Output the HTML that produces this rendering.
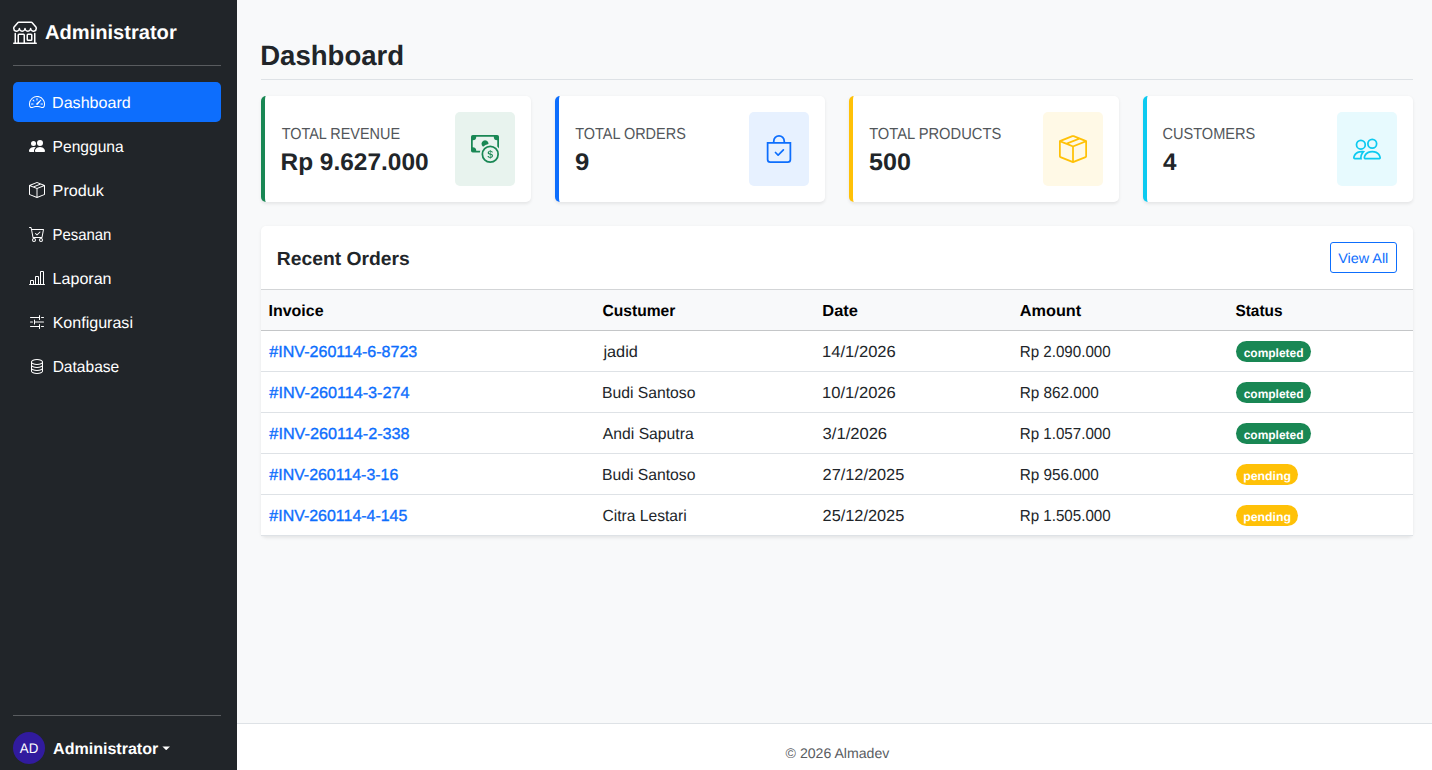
<!DOCTYPE html>
<html lang="en">
<head>
<meta charset="utf-8">
<title>Dashboard</title>
<style>
*{box-sizing:border-box;margin:0;padding:0}
html,body{width:1432px;height:770px;overflow:hidden}
body{text-rendering:geometricPrecision;font-family:"Liberation Sans",sans-serif;font-size:16px;line-height:24px;color:#212529;background:#f8f9fa;position:relative}
svg{display:block;fill:currentColor}
.t{display:inline-block;white-space:nowrap}

/* ---------- sidebar ---------- */
#sidebar{position:absolute;left:0;top:0;width:237px;height:770px;background:#212529;color:#fff}
#brand{position:absolute;left:13px;top:20px;height:24px;display:flex;align-items:center}
#brand svg{width:24px;height:24px;margin-right:8px}
#brand .t{font-weight:700;font-size:20px;line-height:24px;position:relative;top:1px}
.hr{position:absolute;left:13px;width:208px;height:1px;background:#595c5f}
#hr1{top:65px}
#hr2{top:715px}
#nav{position:absolute;left:13px;top:82px;width:208px;list-style:none}
#nav li{height:40px;margin-bottom:4px;border-radius:5px;display:flex;align-items:center;padding-left:16px}
#nav li.active{background:#0d6efd}
#nav svg{width:16px;height:16px;margin-right:8px;flex:none}
#nav .t{font-size:16px;position:relative;top:2px}
#user{position:absolute;left:13px;top:732px;height:32px;display:flex;align-items:center}
#avatar{margin-right:8px;width:32px;height:32px;border-radius:50%;background:#311b9e;font-size:14px;line-height:32px;text-align:center}
#user .name{font-weight:700;font-size:16px;position:relative;top:2px}
#caret{position:absolute;left:149.4px;top:14.4px;width:7.6px;height:3.8px;background:#fff;clip-path:polygon(0 0,100% 0,50% 100%)}

/* ---------- main ---------- */
#title{position:absolute;left:261px;top:39px;font-size:28px;line-height:34px;font-weight:700}
#titleline{position:absolute;left:261px;top:79px;width:1152px;height:1px;background:#dee2e6}
.card{position:absolute;top:96px;width:270px;height:106px;background:#fff;border-radius:5px;border-left:4px solid;box-shadow:0 1.6px 3.2px rgba(0,0,0,.08)}
.card .lbl{position:absolute;left:16px;top:27px;font-size:16px;line-height:24px;color:#52565a}
.card .val{position:absolute;left:16px;top:52px;font-size:24px;line-height:29px;font-weight:700;color:#212529}
.card .ico{position:absolute;left:190px;top:16px;width:60px;height:74px;border-radius:5px;display:flex;align-items:center;justify-content:center}
.card .ico svg{width:28px;height:28px}
#c1{left:261px;border-color:#198754}#c1 .ico{background:#e8f3ee;color:#198754}
#c2{left:555px;border-color:#0d6efd}#c2 .ico{background:#e7f1ff;color:#0d6efd}
#c3{left:849px;border-color:#ffc107}#c3 .ico{background:#fff9e6;color:#ffc107}
#c4{left:1143px;border-color:#0dcaf0}#c4 .ico{background:#e7fafe;color:#0dcaf0}

/* ---------- orders ---------- */
#orders{position:absolute;left:261px;top:226px;width:1152px;height:310px;background:#fff;border-radius:5px;box-shadow:0 1.6px 3.2px rgba(0,0,0,.08)}
#ohead{height:64px;border-bottom:1px solid #d3d5d7;position:relative}
#ohead h5{position:absolute;left:16px;top:22px;font-size:19px;line-height:24px;font-weight:700}
#viewall{position:absolute;left:1069px;top:16px;width:67px;height:31px;border:1px solid #0d6efd;border-radius:3px;color:#0d6efd;font-size:14px;line-height:31px;text-align:center}
table{border-collapse:separate;border-spacing:0;table-layout:fixed;width:1152px}
th,td{height:41px;padding:10px 8px 0;text-align:left;vertical-align:top;border-bottom:1px solid #dee2e6;white-space:nowrap;font-size:16px;line-height:24px}
th{background:#f8f9fa;font-weight:700;color:#000;border-bottom-color:#c4c6c8}
td{background:#fff}
td a{color:#0d6efd;text-decoration:none;-webkit-text-stroke:.35px #0d6efd}
.badge{display:block;margin-top:0;height:21px;border-radius:11px;padding:0 8px;color:#fff;font-size:12px;line-height:21px;font-weight:700}
.bg-s{width:75px}.bg-w{width:62px}
.badge .t{position:relative;top:2px}
.bg-s{background:#198754}
.bg-w{background:#ffc107}

/* ---------- footer ---------- */
#footer{position:absolute;left:237px;top:723px;width:1195px;height:47px;background:#fff;border-top:1px solid #dee2e6}
#ftext{position:absolute;left:786px;top:743px;font-size:14px;line-height:21px;color:#595c5f}
/*AUTO*/
.t{transform-origin:0 50%}
#brandt{transform:translateX(-0.00px) scaleX(1.0045)}
#n1{transform:translateX(-0.93px) scaleX(1.0045)}
#n2{transform:translateX(-0.42px) scaleX(0.9740)}
#n3{transform:translateX(-0.39px) scaleX(1.0110)}
#n4{transform:translateX(-0.50px) scaleX(0.9328)}
#n5{transform:translateX(-0.39px) scaleX(1.0031)}
#n6{transform:translateX(-0.37px) scaleX(1.0035)}
#n7{transform:translateX(-0.37px) scaleX(0.9726)}
#usert{transform:translateX(0.05px) scaleX(1.0030)}
#adt{transform:translateX(0.84px) scaleX(0.9496)}
#titlet{transform:translateX(-0.86px) scaleX(0.9847)}
#l1{transform:translateX(0.67px) scaleX(0.9016)}
#v1{transform:translateX(-0.50px) scaleX(1.0181)}
#l2{transform:translateX(0.16px) scaleX(0.9038)}
#v2{transform:translateX(0.01px) scaleX(1.0701)}
#l3{transform:translateX(0.15px) scaleX(0.9187)}
#v3{transform:translateX(0.05px) scaleX(1.0450)}
#l4{transform:translateX(-0.56px) scaleX(0.9106)}
#v4{transform:translateX(0.05px) scaleX(1.0085)}
#oh{transform:translateX(-0.21px) scaleX(1.0152)}
#va{transform:translateX(-0.77px) scaleX(1.0269)}
#h1{transform:translateX(-0.44px) scaleX(0.9977)}
#h2{transform:translateX(-0.50px) scaleX(0.9753)}
#h3{transform:translateX(-0.70px) scaleX(1.0254)}
#h4{transform:translateX(-0.26px) scaleX(1.0165)}
#h5{transform:translateX(-0.56px) scaleX(0.9622)}
#i1{transform:translateX(0.37px) scaleX(1.0034)}
#i2{transform:translateX(0.37px) scaleX(1.0123)}
#i3{transform:translateX(0.37px) scaleX(1.0129)}
#i4{transform:translateX(0.37px) scaleX(0.9946)}
#i5{transform:translateX(0.37px) scaleX(0.9964)}
#u1{transform:translateX(0.39px) scaleX(1.0185)}
#u2{transform:translateX(-1.07px) scaleX(0.9821)}
#u3{transform:translateX(-0.17px) scaleX(0.9817)}
#u4{transform:translateX(-1.07px) scaleX(0.9821)}
#u5{transform:translateX(-0.56px) scaleX(0.9764)}
#d1{transform:translateX(-0.90px) scaleX(1.0348)}
#d2{transform:translateX(-0.90px) scaleX(1.0348)}
#d3{transform:translateX(-0.40px) scaleX(1.0354)}
#d4{transform:translateX(-0.43px) scaleX(1.0202)}
#d5{transform:translateX(-0.43px) scaleX(1.0202)}
#a1{transform:translateX(-0.28px) scaleX(0.9464)}
#a2{transform:translateX(-0.30px) scaleX(0.9559)}
#a3{transform:translateX(-0.28px) scaleX(0.9464)}
#a4{transform:translateX(-0.30px) scaleX(0.9559)}
#a5{transform:translateX(-0.28px) scaleX(0.9464)}
#ft{transform:translateX(-0.43px) scaleX(1.0084)}
.bc{transform:translateX(-0.33px) scaleX(0.9977)}
.bp{transform:translateX(-0.86px) scaleX(1.0285)}
/*END*/
</style>
</head>
<body>
<div id="sidebar">
  <div id="brand">
    <svg viewBox="0 0 16 16"><path d="M2.97 1.35A1 1 0 0 1 3.73 1h8.54a1 1 0 0 1 .76.35l2.609 3.044A1.5 1.5 0 0 1 16 5.37v.255a2.375 2.375 0 0 1-4.25 1.458A2.37 2.37 0 0 1 9.875 8 2.37 2.37 0 0 1 8 7.083 2.37 2.37 0 0 1 6.125 8a2.37 2.37 0 0 1-1.875-.917A2.375 2.375 0 0 1 0 5.625V5.37a1.5 1.5 0 0 1 .361-.976zm1.78 4.275a1.375 1.375 0 0 0 2.75 0 .5.5 0 0 1 1 0 1.375 1.375 0 0 0 2.75 0 .5.5 0 0 1 1 0 1.375 1.375 0 1 0 2.75 0V5.37a.5.5 0 0 0-.12-.325L12.27 2H3.73L1.12 5.045A.5.5 0 0 0 1 5.37v.255a1.375 1.375 0 0 0 2.75 0 .5.5 0 0 1 1 0M1.5 8.5A.5.5 0 0 1 2 9v6h1v-5a1 1 0 0 1 1-1h3a1 1 0 0 1 1 1v5h6V9a.5.5 0 0 1 1 0v6h.5a.5.5 0 0 1 0 1H.5a.5.5 0 0 1 0-1H1V9a.5.5 0 0 1 .5-.5M4 15h3v-5H4zm5-5a1 1 0 0 1 1-1h2a1 1 0 0 1 1 1v3a1 1 0 0 1-1 1h-2a1 1 0 0 1-1-1zm3 0h-2v3h2z"/></svg>
    <span class="t" id="brandt">Administrator</span>
  </div>
  <div class="hr" id="hr1"></div>
  <ul id="nav">
    <li class="active"><svg viewBox="0 0 16 16"><path d="M8 4a.5.5 0 0 1 .5.5V6a.5.5 0 0 1-1 0V4.500A.5.5 0 0 1 8 4M3.732 5.732a.5.5 0 0 1 .707 0l.915.914a.5.5 0 1 1-.708.708l-.914-.915a.5.5 0 0 1 0-.707M2 10a.5.5 0 0 1 .5-.5h1.586a.5.5 0 0 1 0 1H2.500A.5.5 0 0 1 2 10m9.500 0a.5.5 0 0 1 .5-.5h1.500a.5.5 0 0 1 0 1H12a.5.5 0 0 1-.5-.5m.754-4.246a.39.39 0 0 0-.527-.02L7.547 9.310a.91.91 0 1 0 1.302 1.258l3.434-4.297a.39.39 0 0 0-.029-.518z"/><path fill-rule="evenodd" d="M0 10a8 8 0 1 1 15.547 2.661c-.442 1.253-1.845 1.602-2.932 1.250C11.309 13.488 9.475 13 8 13c-1.474 0-3.310.488-4.615.911-1.087.352-2.490.003-2.932-1.250A8 8 0 0 1 0 10m8-7a7 7 0 0 0-6.603 9.329c.203.575.923.876 1.680.630C4.397 12.533 6.358 12 8 12s3.604.532 4.923.960c.757.245 1.477-.056 1.680-.631A7 7 0 0 0 8 3"/></svg><span class="t" id="n1">Dashboard</span></li>
    <li><svg viewBox="0 0 16 16"><path d="M7 14s-1 0-1-1 1-4 5-4 5 3 5 4-1 1-1 1zm4-6a3 3 0 1 0 0-6 3 3 0 0 0 0 6m-5.784 6A2.240 2.240 0 0 1 5 13c0-1.355.680-2.750 1.936-3.720A6.300 6.300 0 0 0 5 9c-4 0-5 3-5 4s1 1 1 1zM4.500 8a2.500 2.500 0 1 0 0-5 2.500 2.500 0 0 0 0 5"/></svg><span class="t" id="n2">Pengguna</span></li>
    <li><svg viewBox="0 0 16 16"><path d="M8.186 1.113a.5.5 0 0 0-.372 0L1.846 3.500l2.404.961L10.404 2zm3.564 1.426L5.596 5 8 5.961 14.154 3.500zm3.250 1.700-6.500 2.600v7.922l6.500-2.600V4.240zM7.500 14.762V6.838L1 4.239v7.923zM7.443.184a1.500 1.500 0 0 1 1.114 0l7.129 2.852A.5.5 0 0 1 16 3.500v8.662a1 1 0 0 1-.629.928l-7.185 2.874a.5.5 0 0 1-.372 0L.630 13.090a1 1 0 0 1-.630-.928V3.500a.5.5 0 0 1 .314-.464z"/></svg><span class="t" id="n3">Produk</span></li>
    <li><svg viewBox="0 0 16 16"><path d="M11.354 6.354a.5.5 0 0 0-.708-.708L8 8.293 6.854 7.146a.5.5 0 1 0-.708.708l1.500 1.500a.5.5 0 0 0 .708 0z"/><path d="M.5 1a.5.5 0 0 0 0 1h1.110l.401 1.607 1.498 7.985A.5.5 0 0 0 4 12h1a2 2 0 1 0 0 4 2 2 0 0 0 0-4h7a2 2 0 1 0 0 4 2 2 0 0 0 0-4h1a.5.5 0 0 0 .491-.408l1.500-8A.5.5 0 0 0 14.500 3H2.890l-.405-1.621A.5.5 0 0 0 2 1zm3.915 10L3.102 4h10.796l-1.313 7zM6 14a1 1 0 1 1-2 0 1 1 0 0 1 2 0m7 0a1 1 0 1 1-2 0 1 1 0 0 1 2 0"/></svg><span class="t" id="n4">Pesanan</span></li>
    <li><svg viewBox="0 0 16 16"><path d="M11 2a1 1 0 0 1 1-1h2a1 1 0 0 1 1 1v12h.5a.5.5 0 0 1 0 1H.5a.5.5 0 0 1 0-1H1v-3a1 1 0 0 1 1-1h2a1 1 0 0 1 1 1v3h1V7a1 1 0 0 1 1-1h2a1 1 0 0 1 1 1v7h1zm1 12h2V2h-2zm-3 0V7H7v7zm-5 0v-3H2v3z"/></svg><span class="t" id="n5">Laporan</span></li>
    <li><svg viewBox="0 0 16 16"><path fill-rule="evenodd" d="M10.500 1a.5.5 0 0 1 .5.5v4a.5.5 0 0 1-1 0V4H1.500a.5.5 0 0 1 0-1H10V1.500a.5.5 0 0 1 .5-.5M12 3.500a.5.5 0 0 1 .5-.5h2a.5.5 0 0 1 0 1h-2a.5.5 0 0 1-.5-.5m-6.500 2A.5.5 0 0 1 6 6v1.500h8.500a.5.5 0 0 1 0 1H6V10a.5.5 0 0 1-1 0V6a.5.5 0 0 1 .5-.5M1 8a.5.5 0 0 1 .5-.5h2a.5.5 0 0 1 0 1h-2A.5.5 0 0 1 1 8m9.500 2a.5.5 0 0 1 .5.5v4a.5.5 0 0 1-1 0V13H1.500a.5.5 0 0 1 0-1H10v-1.500a.5.5 0 0 1 .5-.5m1.500 2.500a.5.5 0 0 1 .5-.5h2a.5.5 0 0 1 0 1h-2a.5.5 0 0 1-.5-.5"/></svg><span class="t" id="n6">Konfigurasi</span></li>
    <li><svg viewBox="0 0 16 16"><path d="M4.318 2.687C5.234 2.271 6.536 2 8 2s2.766.270 3.682.687C12.644 3.125 13 3.627 13 4c0 .374-.356.875-1.318 1.313C10.766 5.729 9.464 6 8 6s-2.766-.270-3.682-.687C3.356 4.875 3 4.373 3 4c0-.374.356-.875 1.318-1.313M13 5.698V7c0 .374-.356.875-1.318 1.313C10.766 8.729 9.464 9 8 9s-2.766-.270-3.682-.687C3.356 7.875 3 7.373 3 7V5.698c.271.202.580.378.904.525C4.978 6.711 6.427 7 8 7s3.022-.289 4.096-.777A5 5 0 0 0 13 5.698M14 4c0-1.007-.875-1.755-1.904-2.223C11.022 1.289 9.573 1 8 1s-3.022.289-4.096.777C2.875 2.245 2 2.993 2 4v9c0 1.007.875 1.755 1.904 2.223C4.978 15.710 6.427 16 8 16s3.022-.289 4.096-.777C13.125 14.755 14 14.007 14 13zm-1 4.698V10c0 .374-.356.875-1.318 1.313C10.766 11.729 9.464 12 8 12s-2.766-.270-3.682-.687C3.356 10.875 3 10.373 3 10V8.698c.271.202.580.378.904.525C4.978 9.710 6.427 10 8 10s3.022-.289 4.096-.777A5 5 0 0 0 13 8.698m0 3V13c0 .374-.356.875-1.318 1.313C10.766 14.729 9.464 15 8 15s-2.766-.270-3.682-.687C3.356 13.875 3 13.373 3 13v-1.302c.271.202.580.378.904.525C4.978 12.710 6.427 13 8 13s3.022-.289 4.096-.777c.324-.147.633-.323.904-.525"/></svg><span class="t" id="n7">Database</span></li>
  </ul>
  <div class="hr" id="hr2"></div>
  <div id="user"><div id="avatar"><span class="t" id="adt">AD</span></div><span class="t name" id="usert">Administrator</span><span id="caret"></span></div>
</div>

<div id="title"><span class="t" id="titlet">Dashboard</span></div>
<div id="titleline"></div>

<div class="card" id="c1"><div class="lbl"><span class="t" id="l1">TOTAL REVENUE</span></div><div class="val"><span class="t" id="v1">Rp 9.627.000</span></div><div class="ico"><svg viewBox="0 0 16 16"><path fill-rule="evenodd" d="M11 15a4 4 0 1 0 0-8 4 4 0 0 0 0 8m5-4a5 5 0 1 1-10 0 5 5 0 0 1 10 0"/><path d="M9.438 11.944c.047.596.518 1.060 1.363 1.116v.440h.375v-.443c.875-.061 1.386-.529 1.386-1.207 0-.618-.390-.936-1.090-1.100l-.296-.070v-1.200c.376.043.614.248.671.532h.658c-.047-.575-.540-1.024-1.329-1.073V8.500h-.375v.450c-.747.073-1.255.522-1.255 1.160 0 .564.380.923 1.010 1.070l.245.060v1.273c-.385-.058-.639-.270-.696-.569zm1.360-1.354c-.369-.085-.569-.260-.569-.522 0-.294.216-.514.572-.578v1.100zm.432.746c.449.104.655.272.655.569 0 .339-.257.571-.709.614v-1.195z"/><path d="M1 0a1 1 0 0 0-1 1v8a1 1 0 0 0 1 1h4.083q.088-.517.258-1H3a2 2 0 0 0-2-2V3a2 2 0 0 0 2-2h10a2 2 0 0 0 2 2v3.528c.380.340.717.728 1 1.154V1a1 1 0 0 0-1-1z"/><path d="M9.998 5.083 10 5a2 2 0 1 0-3.132 1.650 6 6 0 0 1 3.130-1.567"/></svg></div></div>
<div class="card" id="c2"><div class="lbl"><span class="t" id="l2">TOTAL ORDERS</span></div><div class="val"><span class="t" id="v2">9</span></div><div class="ico"><svg viewBox="0 0 16 16"><path fill-rule="evenodd" d="M10.854 8.146a.5.5 0 0 1 0 .708l-3 3a.5.5 0 0 1-.708 0l-1.500-1.500a.5.5 0 0 1 .708-.708L7.500 10.793l2.646-2.647a.5.5 0 0 1 .708 0"/><path d="M8 1a2.500 2.500 0 0 1 2.500 2.500V4h-5v-.5A2.500 2.500 0 0 1 8 1m3.500 3v-.5a3.500 3.500 0 1 0-7 0V4H1v10a2 2 0 0 0 2 2h10a2 2 0 0 0 2-2V4zM2 5h12v9a1 1 0 0 1-1 1H3a1 1 0 0 1-1-1z"/></svg></div></div>
<div class="card" id="c3"><div class="lbl"><span class="t" id="l3">TOTAL PRODUCTS</span></div><div class="val"><span class="t" id="v3">500</span></div><div class="ico"><svg viewBox="0 0 16 16"><path d="M8.186 1.113a.5.5 0 0 0-.372 0L1.846 3.500l2.404.961L10.404 2zm3.564 1.426L5.596 5 8 5.961 14.154 3.500zm3.250 1.700-6.500 2.600v7.922l6.500-2.600V4.240zM7.500 14.762V6.838L1 4.239v7.923zM7.443.184a1.500 1.500 0 0 1 1.114 0l7.129 2.852A.5.5 0 0 1 16 3.500v8.662a1 1 0 0 1-.629.928l-7.185 2.874a.5.5 0 0 1-.372 0L.630 13.090a1 1 0 0 1-.630-.928V3.500a.5.5 0 0 1 .314-.464z"/></svg></div></div>
<div class="card" id="c4"><div class="lbl"><span class="t" id="l4">CUSTOMERS</span></div><div class="val"><span class="t" id="v4">4</span></div><div class="ico"><svg viewBox="0 0 16 16"><path d="M15 14s1 0 1-1-1-4-5-4-5 3-5 4 1 1 1 1zm-7.978-1L7 12.996c.001-.264.167-1.030.760-1.720C8.312 10.629 9.282 10 11 10c1.717 0 2.687.630 3.240 1.276.593.690.758 1.457.760 1.720l-.008.002-.014.002zM11 7a2 2 0 1 0 0-4 2 2 0 0 0 0 4m3-2a3 3 0 1 1-6 0 3 3 0 0 1 6 0M6.936 9.280a6 6 0 0 0-1.230-.247A7 7 0 0 0 5 9c-4 0-5 3-5 4q0 1 1 1h4.216A2.240 2.240 0 0 1 5 13c0-1.010.377-2.042 1.090-2.904.243-.294.526-.569.846-.816M4.920 10A5.500 5.500 0 0 0 4 13H1c0-.260.164-1.030.760-1.724.545-.636 1.492-1.256 3.160-1.275ZM1.500 5.500a3 3 0 1 1 6 0 3 3 0 0 1-6 0m3-2a2 2 0 1 0 0 4 2 2 0 0 0 0-4"/></svg></div></div>

<div id="orders">
  <div id="ohead"><h5><span class="t" id="oh">Recent Orders</span></h5><div id="viewall"><span class="t" id="va">View All</span></div></div>
  <table>
    <colgroup><col style="width:334px"><col style="width:220px"><col style="width:197px"><col style="width:216px"><col style="width:185px"></colgroup>
    <thead><tr><th><span class="t" id="h1">Invoice</span></th><th><span class="t" id="h2">Custumer</span></th><th><span class="t" id="h3">Date</span></th><th><span class="t" id="h4">Amount</span></th><th><span class="t" id="h5">Status</span></th></tr></thead>
    <tbody>
      <tr><td><a><span class="t" id="i1">#INV-260114-6-8723</span></a></td><td><span class="t" id="u1">jadid</span></td><td><span class="t" id="d1">14/1/2026</span></td><td><span class="t" id="a1">Rp 2.090.000</span></td><td><span class="badge bg-s"><span class="t bc">completed</span></span></td></tr>
      <tr><td><a><span class="t" id="i2">#INV-260114-3-274</span></a></td><td><span class="t" id="u2">Budi Santoso</span></td><td><span class="t" id="d2">10/1/2026</span></td><td><span class="t" id="a2">Rp 862.000</span></td><td><span class="badge bg-s"><span class="t bc">completed</span></span></td></tr>
      <tr><td><a><span class="t" id="i3">#INV-260114-2-338</span></a></td><td><span class="t" id="u3">Andi Saputra</span></td><td><span class="t" id="d3">3/1/2026</span></td><td><span class="t" id="a3">Rp 1.057.000</span></td><td><span class="badge bg-s"><span class="t bc">completed</span></span></td></tr>
      <tr><td><a><span class="t" id="i4">#INV-260114-3-16</span></a></td><td><span class="t" id="u4">Budi Santoso</span></td><td><span class="t" id="d4">27/12/2025</span></td><td><span class="t" id="a4">Rp 956.000</span></td><td><span class="badge bg-w"><span class="t bp">pending</span></span></td></tr>
      <tr><td><a><span class="t" id="i5">#INV-260114-4-145</span></a></td><td><span class="t" id="u5">Citra Lestari</span></td><td><span class="t" id="d5">25/12/2025</span></td><td><span class="t" id="a5">Rp 1.505.000</span></td><td><span class="badge bg-w"><span class="t bp">pending</span></span></td></tr>
    </tbody>
  </table>
</div>

<div id="footer"></div>
<div id="ftext"><span class="t" id="ft">© 2026 Almadev</span></div>
</body>
</html>
